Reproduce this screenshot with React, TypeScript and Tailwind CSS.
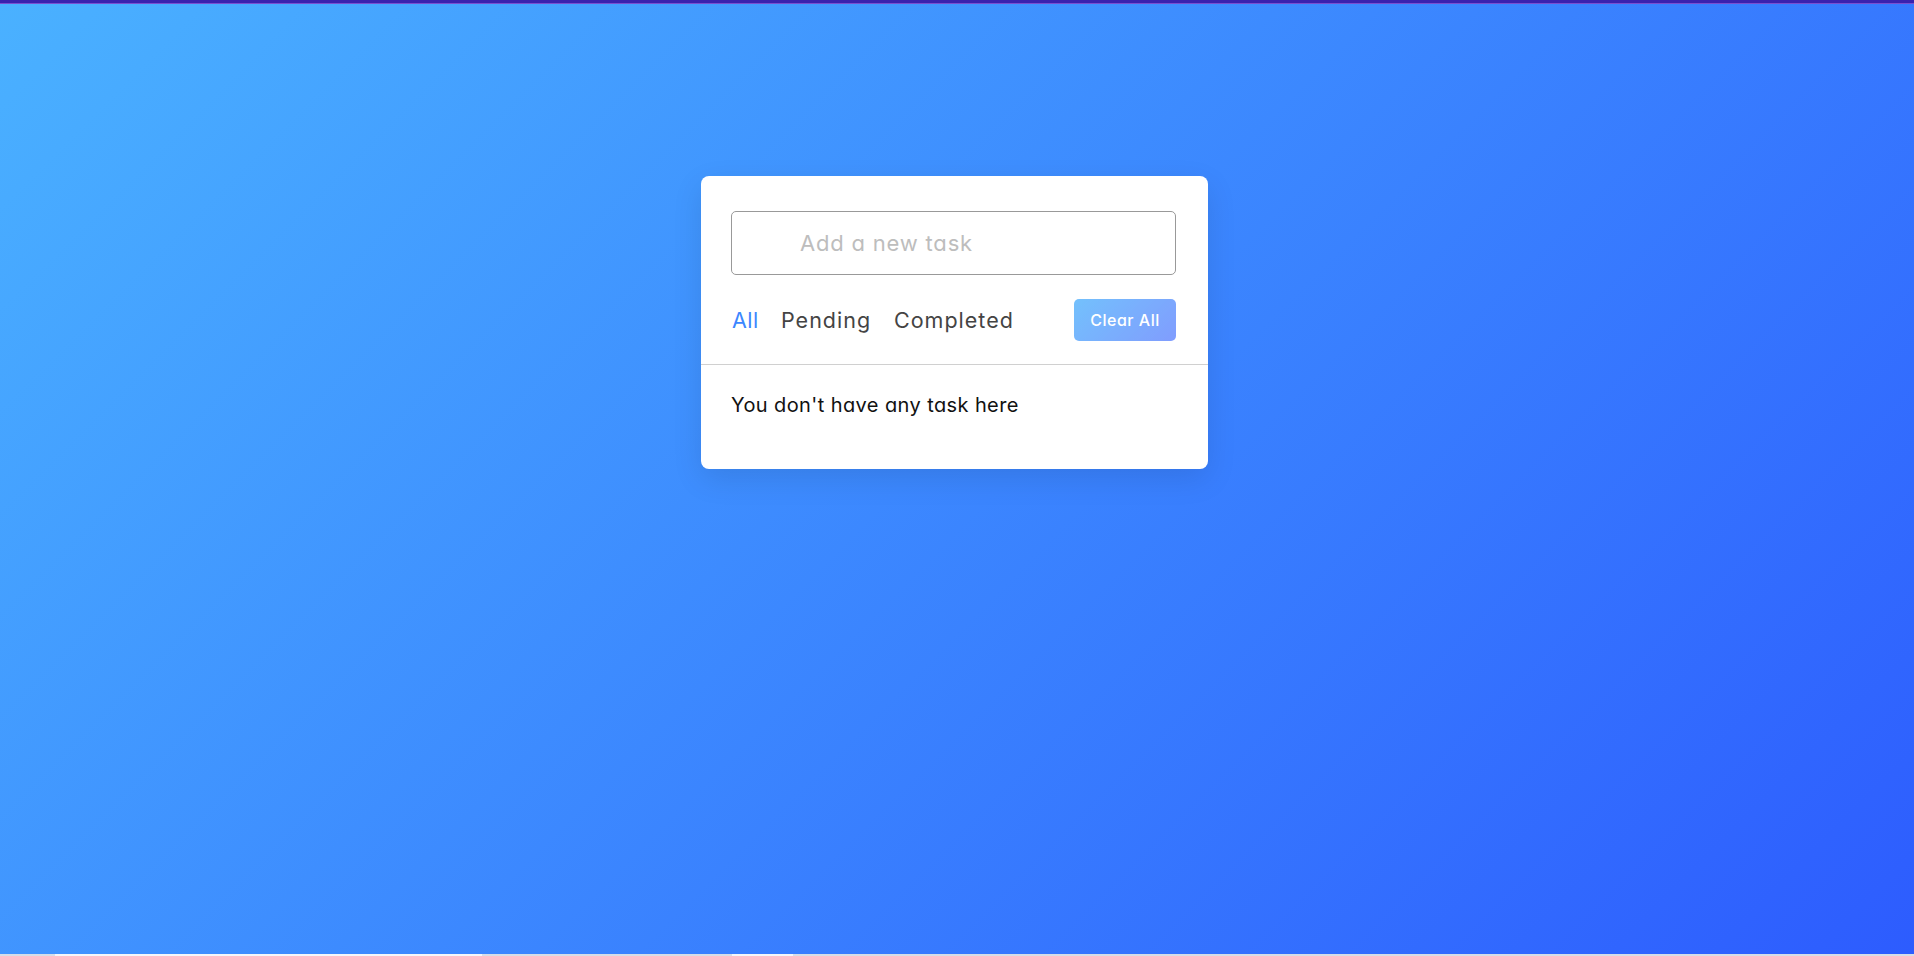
import React from "react";

export default function App() {
  const font = { fontFamily: "Inter, 'Open Sans', sans-serif" };
  return (
    <div className="flex h-screen w-full flex-col overflow-hidden" style={font}>
      <div className="h-[4px] w-full bg-[#3a22ae] border-b border-b-[#7a4fd0]" />
      <div className="flex flex-1 justify-center bg-[linear-gradient(135deg,#4AB1FF,#2D5CFE)] pr-[5px]">
        <div className="mt-[172px] h-[293px] w-[507px] rounded-[8px] bg-white pt-[35px] shadow-[0_10px_30px_rgba(0,0,0,0.1)] [font-feature-settings:'cv11']">
          <div className="pl-[30px] pr-[32px]">
            <div className="flex h-[64px] items-center rounded-[5px] border border-[#999] pl-[68px]">
              <span className="text-[22px] tracking-[0.8px] text-[#bdbdbd]">Add a new task</span>
            </div>
          </div>
          <div className="mt-[24px] flex items-center justify-between border-b border-[#d0d0d0] pl-[30px] pr-[32px] pb-[23px]">
            <div className="flex items-center text-[21.5px] tracking-[1px] text-[#444]">
              <span className="w-[50px] pl-[1px] tracking-[0.5px] text-[#3C87FF]">All</span>
              <span className="w-[113px]">Pending</span>
              <span>Completed</span>
            </div>
            <button className="h-[42px] w-[102px] rounded-[5px] bg-[linear-gradient(135deg,#1798fb_0%,#2D5CFE_100%)] text-[16px] font-medium tracking-[0.5px] text-white opacity-60">
              Clear All
            </button>
          </div>
          <div className="px-[30px] pt-[25px]">
            <p className="text-[20px] leading-[30px] tracking-[0.4px] text-[#111]">You don't have any task here</p>
          </div>
        </div>
      </div>
      <div className="flex h-[2px] w-full bg-[#d6dde8]">
        <div className="ml-[55px] h-full w-[427px] bg-[#f4f6fa]" />
        <div className="ml-[250px] h-full w-[61px] bg-[#f4f6fa]" />
      </div>
    </div>
  );
}
